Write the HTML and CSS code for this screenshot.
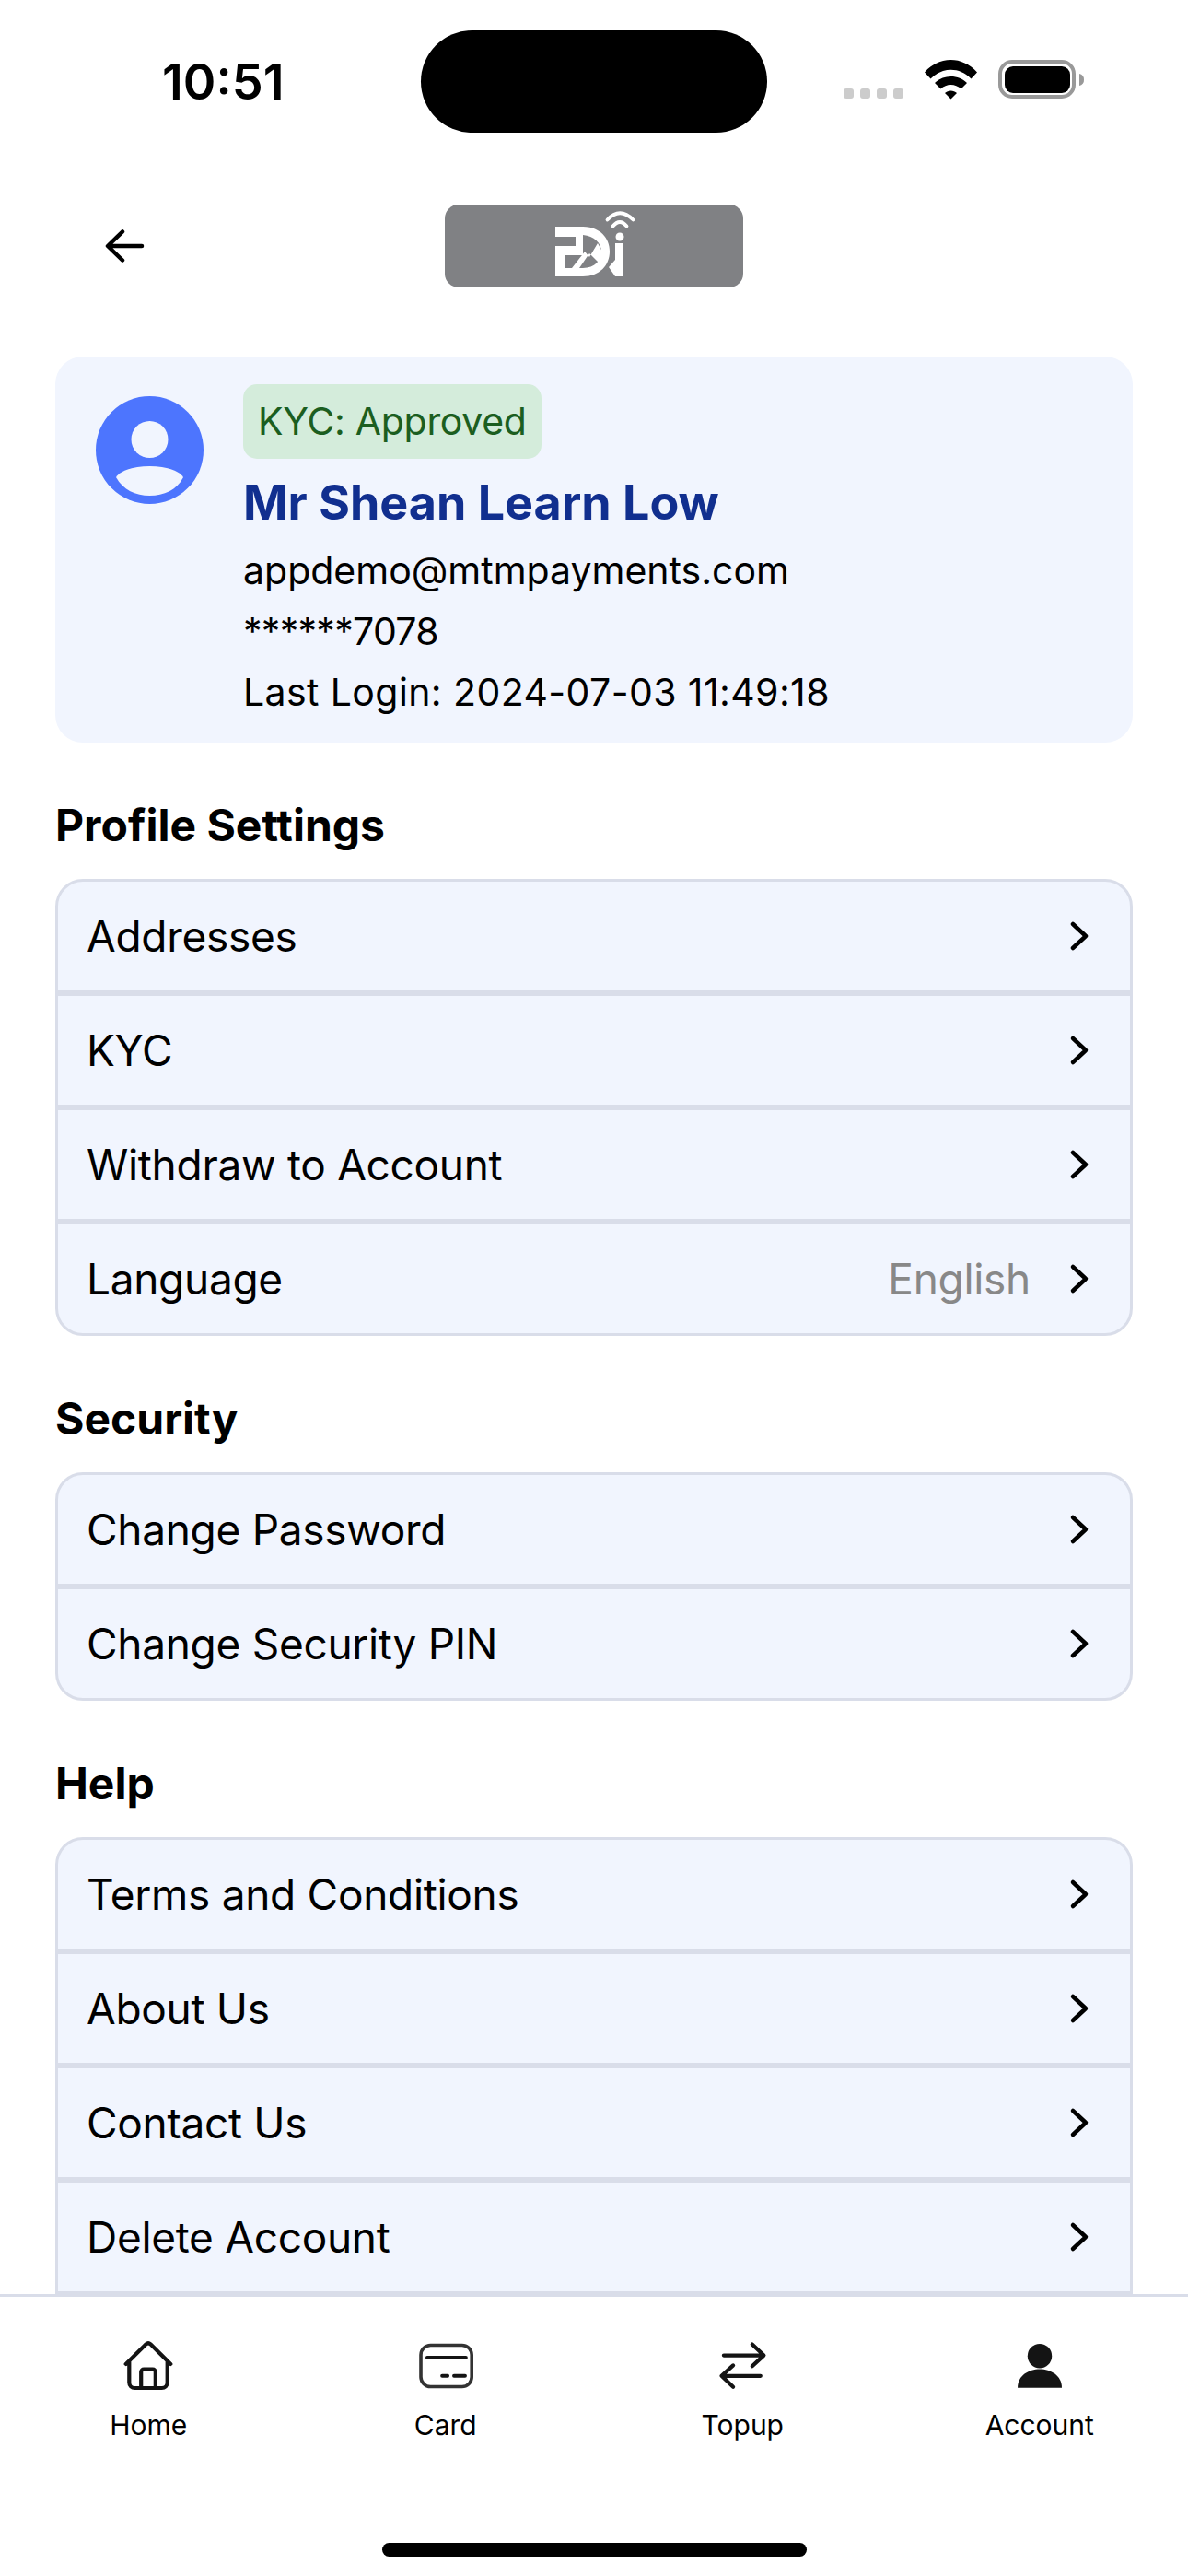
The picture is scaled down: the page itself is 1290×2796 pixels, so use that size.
FILE: index.html
```html
<!DOCTYPE html>
<html>
<head>
  <meta charset="UTF-8">
  <meta name="viewport" content="width=device-width, initial-scale=1">
  <title>Account</title>
  <link rel="stylesheet" href="styles.css">
</head>
<body>
  <div class="status-bar">
    <div class="status-time">10:51</div>
    <div class="island"></div>
    <div class="status-icons">
      <div class="signal"><span></span><span></span><span></span><span></span></div>
      <svg width="57" height="43" viewBox="0 0 57 43"><path d="M0 13.5C16-4.5 41-4.5 57 13.5L50.5 20.5C38 7.5 19 7.5 6.5 20.5Z"/><path d="M11 25C20 15.5 37 15.5 46 25L39.5 31.5C33.5 25.5 23.5 25.5 17.5 31.5Z"/><path d="M22 36C25.5 32.5 31.5 32.5 35 36L28.5 42.5Z"/></svg>
      <svg width="94" height="43" viewBox="0 0 94 43"><rect x="2" y="2" width="80" height="38" rx="13" fill="none" stroke="#999" stroke-width="4"/><rect x="7" y="7" width="71" height="29" rx="9"/><path d="M88 15a6 6 0 0 1 5 6.500a6 6 0 0 1-5 6.500Z" fill="#999"/></svg>
    </div>
  </div>

  <header class="top-bar">
    <svg class="back-icon" width="48" height="48" viewBox="0 0 48 48"><path d="M43 24H7M22 8.500L6 24l16 15.500" fill="none" stroke="#000" stroke-width="4.500" stroke-linecap="round" stroke-linejoin="round"/></svg>
    <div class="logo">
      <svg width="324" height="90" viewBox="0 0 324 90">
        <!-- E and D drawn as one shape with the bowl cut out -->
        <path fill-rule="evenodd" fill="#fff" d="M120 24H150C168 24 179 36 179 51C179 66 168 78 150 78H120V45H142V35H120ZM150 33C162 34 170 42 170 51C170 60 163 69 150 69H130V55H150Z"/>
        <!-- zigzag inside the bowl -->
        <path fill="#fff" d="M138 69L152 51L157 57L166 42L172 53L168 64L157 53L146 69Z"/>
        <!-- i stem -->
        <path fill="#fff" d="M185 42H194V78H185L178 68L185 60Z"/>
        <circle cx="190" cy="35" r="4.500" fill="#fff"/>
        <path d="M176.500 16.500Q190 2 204.500 16.500M182.500 23.500Q190 14.500 197.500 23.500" fill="none" stroke="#fff" stroke-width="3.800" stroke-linecap="round"/>
      </svg>
    </div>
    <div></div>
  </header>

  <main class="content">
    <section class="profile-card">
      <svg class="avatar" width="117" height="117" viewBox="0 0 117 117">
        <circle cx="58.500" cy="58.500" r="58.500" fill="#4d75fe"/>
        <circle cx="58.500" cy="47" r="20" fill="#f1f5fe"/>
        <path d="M22 88C32 72 85 72 95 88C88 102 74 108 58.500 108S30 102 22 88Z" fill="#f1f5fe"/>
      </svg>
      <div class="profile-info">
        <span class="kyc-badge">KYC: Approved</span>
        <div class="profile-name">Mr Shean Learn Low</div>
        <div class="profile-line">appdemo@mtmpayments.com</div>
        <div class="profile-line profile-phone">******7078</div>
        <div class="profile-line profile-login">Last Login: 2024-07-03 11:49:18</div>
      </div>
    </section>

    <h2 class="section-title">Profile Settings</h2>
    <div class="menu-group">
      <a class="menu-row"><span>Addresses</span><svg class="chevron" viewBox="0 0 24 36"><path d="M5 5L19 18L5 31"/></svg></a>
      <a class="menu-row"><span>KYC</span><svg class="chevron" viewBox="0 0 24 36"><path d="M5 5L19 18L5 31"/></svg></a>
      <a class="menu-row"><span>Withdraw to Account</span><svg class="chevron" viewBox="0 0 24 36"><path d="M5 5L19 18L5 31"/></svg></a>
      <a class="menu-row"><span>Language</span><span class="menu-value">English</span><svg class="chevron" viewBox="0 0 24 36"><path d="M5 5L19 18L5 31"/></svg></a>
    </div>

    <h2 class="section-title">Security</h2>
    <div class="menu-group">
      <a class="menu-row"><span>Change Password</span><svg class="chevron" viewBox="0 0 24 36"><path d="M5 5L19 18L5 31"/></svg></a>
      <a class="menu-row"><span>Change Security PIN</span><svg class="chevron" viewBox="0 0 24 36"><path d="M5 5L19 18L5 31"/></svg></a>
    </div>

    <h2 class="section-title">Help</h2>
    <div class="menu-group is-cut">
      <a class="menu-row"><span>Terms and Conditions</span><svg class="chevron" viewBox="0 0 24 36"><path d="M5 5L19 18L5 31"/></svg></a>
      <a class="menu-row"><span>About Us</span><svg class="chevron" viewBox="0 0 24 36"><path d="M5 5L19 18L5 31"/></svg></a>
      <a class="menu-row"><span>Contact Us</span><svg class="chevron" viewBox="0 0 24 36"><path d="M5 5L19 18L5 31"/></svg></a>
      <a class="menu-row"><span>Delete Account</span><svg class="chevron" viewBox="0 0 24 36"><path d="M5 5L19 18L5 31"/></svg></a>
    </div>
  </main>

  <nav class="tab-bar">
    <a class="tab">
      <svg class="tab-icon" viewBox="0 0 24 24"><path d="M3.900 11.300L11.200 4.100Q12 3.400 12.800 4.100L20.100 11.300M5.100 10.300V18a2 2 0 0 0 2 2H16.900a2 2 0 0 0 2-2V10.300M9.400 20V14.200a1 1 0 0 1 1-1h3.200a1 1 0 0 1 1 1V20" fill="none" stroke="#141414" stroke-width="1.400" stroke-linecap="round" stroke-linejoin="round"/></svg>
      <span>Home</span>
    </a>
    <a class="tab">
      <svg class="tab-icon" viewBox="0 0 24 24"><rect x="3" y="4.500" width="18.400" height="15" rx="3.500" fill="none" stroke="#333" stroke-width="1.200"/><path d="M5.300 9H19.300M10.700 15.600H12.700M15 15.600H19" fill="none" stroke="#141414" stroke-width="1.300" stroke-linecap="round"/></svg>
      <span>Card</span>
    </a>
    <a class="tab">
      <svg class="tab-icon" viewBox="0 0 24 24"><path d="M5.300 8.200H19.800M15.600 4.200L19.800 8.200L15.600 12.100M18.600 15.600H4.500M8.700 11.800L4.500 15.600L8.700 19.600" fill="none" stroke="#141414" stroke-width="1.400" stroke-linecap="round" stroke-linejoin="round"/></svg>
      <span>Topup</span>
    </a>
    <a class="tab">
      <svg class="tab-icon" viewBox="0 0 24 24"><circle cx="12" cy="8.400" r="4.400" fill="#141414"/><path d="M4 19.900C4 15.500 8 13.200 12 13.200S20 15.500 20 19.900Z" fill="#141414"/></svg>
      <span>Account</span>
    </a>
    <div class="home-indicator"></div>
  </nav>
</body>
</html>
```

FILE: styles.css
```css
* {
  box-sizing: border-box;
}
body {
  margin: 0;
  width: 1290px;
  height: 2796px;
  display: flex;
  flex-direction: column;
  overflow: hidden;
  background: white;
  font-family: Inter, "Noto Sans", sans-serif;
  color: #000;
}

/* Status bar */
.status-bar {
  display: grid;
  grid-template-columns: 1fr 376px 1fr;
  padding-top: 33px;
  flex-shrink: 0;
}
.status-time {
  padding: 27px 0 0 176px;
  font-size: 54px;
  line-height: 58px;
  font-weight: 600;
}
.island {
  height: 111px;
  background: black;
  border-radius: 56px;
}
.status-icons {
  display: flex;
  align-items: flex-end;
  gap: 23px;
  height: 75px;
  padding-left: 83px;
}
.signal {
  display: flex;
  gap: 7px;
  margin-bottom: 1px;
}
.signal span {
  width: 11px;
  height: 11px;
  background: #ccc;
  border-radius: 3px;
}

/* Header */
.top-bar {
  display: grid;
  grid-template-columns: 1fr 324px 1fr;
  align-items: center;
  margin-top: 78px;
  flex-shrink: 0;
}
.back-icon {
  margin-left: 111px;
}
.logo {
  height: 90px;
  background: #808184;
  border-radius: 15px;
}
.logo svg {
  display: block;
}

.content {
  flex: 1;
  min-height: 0;
  overflow: hidden;
  padding: 75px 60px 0;
}
.profile-card {
  display: flex;
  gap: 43px;
  height: 419px;
  padding: 30px 44px 0;
  background: #f1f5fe;
  border-radius: 30px;
}
.avatar {
  margin-top: 13px;
  flex-shrink: 0;
}
.kyc-badge {
  display: inline-block;
  height: 81px;
  padding: 0 16px;
  background: #d4ecdb;
  border-radius: 15px;
  color: #1b5e20;
  font-size: 41px;
  letter-spacing: -0.3px;
  line-height: 81px;
}
.profile-name {
  margin: 15px 0 7px;
  color: #112f8f;
  font-size: 52px;
  line-height: 66px;
  font-weight: 700;
}
.profile-line {
  font-size: 41px;
  line-height: 66px;
}
.profile-phone {
  letter-spacing: -0.7px;
}
.profile-login {
  letter-spacing: 0.4px;
}

.section-title {
  margin: 60px 0 28px;
  font-size: 48px;
  line-height: 60px;
  font-weight: 700;
}
.menu-group {
  border: 3px solid #d9dde9;
  border-radius: 30px;
  background: #f1f5fe;
  overflow: hidden;
}
.menu-group.is-cut {
  border-bottom: none;
  border-radius: 30px 30px 0 0;
}
.menu-row {
  display: flex;
  align-items: center;
  height: 124px;
  padding: 0 43px 0 31px;
  border-bottom: 3px solid #d9dde9;
  border-top: 3px solid #d9dde9;
  font-size: 46px;
  letter-spacing: -0.3px;
}
.menu-row:first-child {
  height: 121px;
  border-top: none;
}
.menu-row:last-child {
  height: 121px;
  border-bottom: none;
}
.is-cut .menu-row:last-child {
  height: 124px;
  border-bottom: 3px solid #d9dde9;
}
.menu-value {
  margin-left: auto;
  margin-right: 41px;
  color: #888;
}
.chevron {
  width: 24px;
  height: 36px;
  margin-left: auto;
  fill: none;
  stroke: #000;
  stroke-width: 4.5;
  stroke-linecap: round;
  stroke-linejoin: round;
}
.menu-value + .chevron {
  margin-left: 0;
}

/* Bottom tabs */
.tab-bar {
  position: relative;
  display: grid;
  grid-template-columns: repeat(4, 1fr);
  height: 306px;
  flex-shrink: 0;
  padding-top: 39px;
  background: white;
  border-top: 3px solid #d9dde9;
}
.tab {
  display: flex;
  flex-direction: column;
  align-items: center;
  gap: 8px;
  font-size: 30px;
  line-height: 40px;
}
.tab-icon {
  width: 72px;
  height: 72px;
}
.home-indicator {
  position: absolute;
  left: 415px;
  bottom: 21px;
  width: 461px;
  height: 15px;
  background: black;
  border-radius: 8px;
}
```
